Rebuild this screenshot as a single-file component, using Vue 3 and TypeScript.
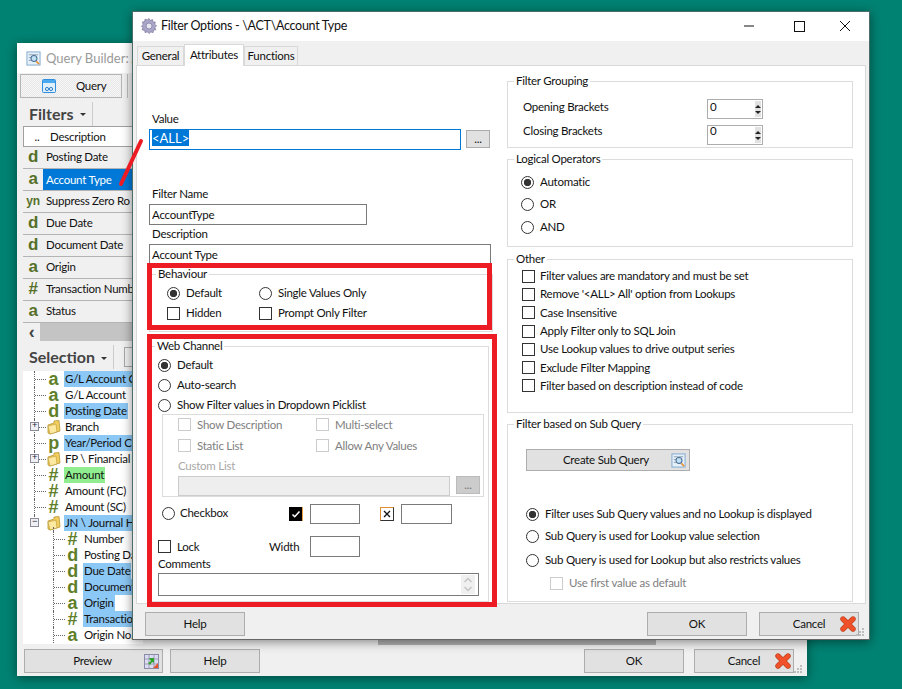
<template>
  <div class="desktop">
    <!-- Query Builder window, behind the dialog -->
    <section class="win back">
      <header class="back-title">
        <svg class="ico-14" viewBox="0 0 16 16"><use href="#query-ico" /></svg>
        <span>Query Builder: A</span>
      </header>
      <div class="back-tabs">
        <div class="query-tab">
          <svg width="14" height="14" viewBox="0 0 14 14">
            <rect x=".5" y=".5" width="13" height="13" rx="1" fill="#dff0fc" stroke="#2f8ee0" />
            <rect x="1" y="1" width="12" height="3" fill="#4aa8ee" />
            <circle cx="5" cy="10" r="1.6" fill="none" stroke="#2f7fc8" />
            <circle cx="9" cy="10" r="1.6" fill="none" stroke="#2f7fc8" />
          </svg>
          <span>Query</span>
        </div>
        <i class="tab-sep"></i>
      </div>

      <div class="pane-head">
        <b>Filters</b><i class="caret"></i><i class="head-sep"></i>
      </div>
      <div class="filter-table">
        <div class="filter-top"><span>..</span><span>Description</span></div>
        <div v-for="f in filters" :key="f.name" class="filter-row" :class="{ picked: f.picked }">
          <b :class="{ small: f.type === 'yn' }">{{ f.type }}</b>
          <span>{{ f.name }}</span>
        </div>
        <div class="h-scroll"><span>‹</span><i></i></div>
      </div>

      <div class="pane-head selection">
        <b>Selection</b><i class="caret"></i><i class="head-sep"></i><i class="mini-btn"></i>
      </div>
      <div class="tree">
        <div v-for="(n, i) in tree" :key="i" class="node" :class="{ deep: n.deep, last: n.last }">
          <i v-if="n.toggle" class="toggle">{{ n.toggle }}</i>
          <i class="twig"></i>
          <svg v-if="n.folder" class="folder" viewBox="0 0 14 15">
            <path d="M1 5 L7 3 L7 1 L12 .5 L13 11 L3 14 L1 13 Z" fill="#f3cf5e" stroke="#b89434" stroke-width=".8" />
            <path d="M1 6 L9 4 L10 12 L3 14 Z" fill="#fbe9a0" stroke="#b89434" stroke-width=".6" />
          </svg>
          <b v-else class="kind">{{ n.type }}</b>
          <span class="node-text" :class="n.mark">{{ n.text }}</span>
          <i v-if="n.gap" class="white-gap"></i>
        </div>
      </div>
      <i class="hidden-bar"></i>

      <footer class="back-foot">
        <button class="btn preview">Preview
          <svg width="15" height="15" viewBox="0 0 15 15">
            <rect x=".5" y=".5" width="14" height="14" fill="#dcdcf0" stroke="#8a8aa8" />
            <path d="M5 .5V14.5M10 .5V14.5M.5 5H14.5M.5 10H14.5" stroke="#9c9cb8" />
            <path d="M5 4h5v5l-2-1-2 3-2-2 3-2z" fill="#2aa52a" />
            <path d="M9 14l5-5v5z" fill="#e8552a" />
          </svg>
        </button>
        <button class="btn help-back">Help</button>
        <span class="spring"></span>
        <button class="btn">OK</button>
        <button class="btn cancel">Cancel
          <svg class="x-ico" viewBox="0 0 16 16"><use href="#red-x" /></svg>
        </button>
      </footer>
      <i class="grip"></i>
    </section>

    <!-- Filter Options dialog -->
    <section class="win dialog">
      <header class="dlg-title">
        <svg width="16" height="16" viewBox="0 0 16 16">
          <path d="M8 .5l1.3 2 2.2-1 .4 2.4 2.4.2-.7 2.3 2 1.4-1.8 1.7 1 2.2-2.4.5-.3 2.4-2.3-.7L8 15.5l-1.7-1.8-2.2 1-.5-2.4-2.4-.3.7-2.3L.5 8l1.8-1.7-1-2.2 2.4-.5.3-2.4 2.3.7z" fill="#a9a6c8" stroke="#77749c" stroke-width=".7" />
          <circle cx="8" cy="8" r="3" fill="#e6e5f2" stroke="#77749c" stroke-width=".7" />
        </svg>
        <span>Filter Options - \ACT\Account Type</span>
        <span class="spring"></span>
        <svg class="cap cap-min" width="46" height="30" viewBox="0 0 46 30"><path d="M13 15h10" stroke="#111" /></svg>
        <svg class="cap" width="46" height="30" viewBox="0 0 46 30"><rect x="17.5" y="10.5" width="10" height="10" fill="none" stroke="#111" /></svg>
        <svg class="cap" width="46" height="30" viewBox="0 0 46 30"><path d="M17 10l10 10M27 10L17 20" stroke="#111" /></svg>
      </header>

      <nav class="tabs">
        <span class="tab t-general">General</span>
        <span class="tab on">Attributes</span>
        <span class="tab t-functions">Functions</span>
      </nav>

      <div class="page">
        <div class="col-left">
          <label class="lbl value-lbl">Value</label>
          <div class="value-row">
            <div class="input value-input"><span class="sel">&lt;ALL&gt;</span></div>
            <button class="btn dots">...</button>
          </div>
          <label class="lbl name-lbl">Filter Name</label>
          <div class="input name-input">AccountType</div>
          <label class="lbl desc-lbl">Description</label>
          <div class="input desc-input">Account Type</div>

          <div class="group behaviour">
            <span class="legend">Behaviour</span>
            <div class="two-up">
              <label class="opt"><i class="radio on"></i>Default</label>
              <label class="opt"><i class="radio"></i>Single Values Only</label>
              <label class="opt"><i class="check"></i>Hidden</label>
              <label class="opt"><i class="check"></i>Prompt Only Filter</label>
            </div>
            <i class="red-box"></i>
          </div>

          <div class="group web">
            <span class="legend">Web Channel</span>
            <label class="opt web-opt"><i class="radio on"></i>Default</label>
            <label class="opt web-opt"><i class="radio"></i>Auto-search</label>
            <label class="opt web-opt"><i class="radio"></i>Show Filter values in Dropdown Picklist</label>
            <div class="picklist">
              <div class="pick-grid">
                <label class="opt off"><i class="check"></i>Show Description</label>
                <label class="opt off"><i class="check"></i>Multi-select</label>
                <label class="opt off"><i class="check"></i>Static List</label>
                <label class="opt off"><i class="check"></i>Allow Any Values</label>
              </div>
              <span class="custom-lbl">Custom List</span>
              <div class="custom-row">
                <div class="custom-input"></div>
                <button class="btn dots off-btn">...</button>
              </div>
            </div>
            <div class="checkbox-row">
              <label class="opt cb-opt"><i class="radio"></i>Checkbox</label>
              <i class="tick-black">
                <svg width="10" height="10" viewBox="0 0 10 10"><path d="M1.5 5.5l2.2 2.2L8.5 2.5" fill="none" stroke="#fff" stroke-width="1.6" /></svg>
              </i>
              <div class="input small-input"></div>
              <i class="tick-x">
                <svg width="10" height="10" viewBox="0 0 10 10"><path d="M2 2l6 6M8 2l-6 6" stroke="#111" stroke-width="1.3" /></svg>
              </i>
              <div class="input small-input"></div>
            </div>
            <div class="lock-row">
              <label class="opt lock-opt"><i class="check"></i>Lock</label>
              <span class="width-lbl">Width</span>
              <div class="input small-input tall"></div>
            </div>
            <label class="lbl comments-lbl">Comments</label>
            <div class="input comments">
              <div class="v-arrows">
                <svg width="8" height="6" viewBox="0 0 8 6"><path d="M.5 5L4 1.5 7.5 5" fill="none" stroke="#c4c4c4" stroke-width="1.4" /></svg>
                <svg width="8" height="6" viewBox="0 0 8 6"><path d="M.5 1L4 4.5 7.5 1" fill="none" stroke="#c4c4c4" stroke-width="1.4" /></svg>
              </div>
            </div>
            <i class="red-box"></i>
          </div>
        </div>

        <div class="col-right">
          <div class="group grouping">
            <span class="legend">Filter Grouping</span>
            <div v-for="b in brackets" :key="b" class="bracket-row">
              <span>{{ b }}</span>
              <div class="spin">
                <span>0</span>
                <div class="spin-btns"><i class="up"></i><i class="down"></i></div>
              </div>
            </div>
          </div>

          <div class="group logical">
            <span class="legend">Logical Operators</span>
            <label class="opt"><i class="radio on"></i>Automatic</label>
            <label class="opt"><i class="radio"></i>OR</label>
            <label class="opt and-opt"><i class="radio"></i>AND</label>
          </div>

          <div class="group other">
            <span class="legend">Other</span>
            <label v-for="o in others" :key="o" class="opt"><i class="check"></i>{{ o }}</label>
          </div>

          <div class="group sub">
            <span class="legend">Filter based on Sub Query</span>
            <button class="btn sub-btn">Create Sub Query
              <svg class="ico-14" viewBox="0 0 16 16"><use href="#query-ico" /></svg>
            </button>
            <label class="opt r1"><i class="radio on"></i>Filter uses Sub Query values and no Lookup is displayed</label>
            <label class="opt r2"><i class="radio"></i>Sub Query is used for Lookup value selection</label>
            <label class="opt r3"><i class="radio"></i>Sub Query is used for Lookup but also restricts values</label>
            <label class="opt off first"><i class="check"></i>Use first value as default</label>
          </div>
        </div>
      </div>

      <footer class="dlg-foot">
        <button class="btn">Help</button>
        <span class="spring"></span>
        <button class="btn">OK</button>
        <button class="btn cancel">Cancel
          <svg class="x-ico" viewBox="0 0 16 16"><use href="#red-x" /></svg>
        </button>
      </footer>
      <i class="grip"></i>
    </section>

    <!-- hand drawn annotation -->
    <svg class="slash" width="30" height="50" viewBox="0 0 30 50">
      <path d="M24 3L4 46" stroke="#ed1c24" stroke-width="4" stroke-linecap="round" />
    </svg>

    <svg width="0" height="0" class="defs">
      <defs>
        <g id="red-x">
          <path d="M3 3l10 10M13 3L3 13" stroke="#b8431f" stroke-width="5.4" stroke-linecap="round" />
          <path d="M3 3l10 10M13 3L3 13" stroke="#f0502a" stroke-width="4.2" stroke-linecap="round" />
        </g>
        <g id="query-ico">
          <rect x="1" y="1" width="14" height="14" fill="#e4f0fa" stroke="#7fa8cf" />
          <path d="M3 4h10M3 7h3M3 10h3" stroke="#8fa0b0" />
          <circle cx="8.5" cy="8" r="3.2" fill="#bfe0f5" stroke="#4a6f94" stroke-width="1.1" />
          <path d="M11 11l3 3" stroke="#e8943a" stroke-width="1.8" />
        </g>
      </defs>
    </svg>
  </div>
</template>

<script setup lang="ts">
interface FilterRow {
  type: string;
  name: string;
  picked?: boolean;
}

interface TreeNode {
  type?: string;
  text: string;
  mark?: string;
  folder?: boolean;
  toggle?: string;
  deep?: boolean;
  last?: boolean;
  gap?: boolean;
}

const filters: FilterRow[] = [
  { type: 'd', name: 'Posting Date' },
  { type: 'a', name: 'Account Type', picked: true },
  { type: 'yn', name: 'Suppress Zero Ro' },
  { type: 'd', name: 'Due Date' },
  { type: 'd', name: 'Document Date' },
  { type: 'a', name: 'Origin' },
  { type: '#', name: 'Transaction Numb' },
  { type: 'a', name: 'Status' },
];

const tree: TreeNode[] = [
  { type: 'a', text: 'G/L Account C', mark: 'blue' },
  { type: 'a', text: 'G/L Account' },
  { type: 'd', text: 'Posting Date', mark: 'blue' },
  { text: 'Branch', folder: true, toggle: '+' },
  { type: 'p', text: 'Year/Period C', mark: 'blue' },
  { text: 'FP \\ Financial', folder: true, toggle: '+' },
  { type: '#', text: 'Amount', mark: 'green' },
  { type: '#', text: 'Amount (FC)' },
  { type: '#', text: 'Amount (SC)' },
  { text: 'JN \\ Journal H', mark: 'blue', folder: true, toggle: '−', last: true },
  { type: '#', text: 'Number', deep: true },
  { type: 'd', text: 'Posting Da', deep: true },
  { type: 'd', text: 'Due Date', mark: 'blue', deep: true },
  { type: 'd', text: 'Document', mark: 'blue', deep: true },
  { type: 'a', text: 'Origin', mark: 'blue', deep: true, gap: true },
  { type: '#', text: 'Transactio', mark: 'blue', deep: true },
  { type: 'a', text: 'Origin No.', deep: true },
];

const brackets = ['Opening Brackets', 'Closing Brackets'];

const others = [
  'Filter values are mandatory and must be set',
  "Remove '<ALL> All' option from Lookups",
  'Case Insensitive',
  'Apply Filter only to SQL Join',
  'Use Lookup values to drive output series',
  'Exclude Filter Mapping',
  'Filter based on description instead of code',
];
</script>

<style>
html,
body {
  margin: 0;
  background: #008272;
}
</style>

<style scoped>
.desktop {
  position: relative;
  width: 902px;
  height: 689px;
  overflow: hidden;
  background: #008272;
  font: 11.5px/16px Lato, "Open Sans", sans-serif;
  letter-spacing: -0.25px;
  color: #111;
}
.defs {
  position: absolute;
}
i {
  font-style: normal;
  display: block;
  flex: none;
}
.spring {
  flex: 1;
}

/* windows */
.win {
  position: absolute;
  box-sizing: border-box;
  background: #f0f0f0;
  display: flex;
  flex-direction: column;
  box-shadow: 0 2px 10px rgba(0, 0, 0, 0.45);
}
.back {
  left: 17px;
  top: 43px;
  width: 790px;
  height: 633px;
  padding-left: 6px;
}
.dialog {
  left: 132px;
  top: 11px;
  width: 738px;
  height: 629px;
  border: 1px solid #4d6e68;
  border-bottom-color: #666;
}
.grip {
  position: absolute;
  right: 5px;
  bottom: 3px;
  width: 2px;
  height: 2px;
  background: #bdbdbd;
  box-shadow: -3px 0 #bdbdbd, -6px 0 #bdbdbd, 0 -3px #bdbdbd, -3px -3px #bdbdbd, 0 -6px #bdbdbd;
}

/* buttons */
.btn {
  box-sizing: border-box;
  width: 100px;
  height: 24px;
  padding: 0;
  border: 1px solid #adadad;
  background: #e1e1e1;
  font: inherit;
  letter-spacing: inherit;
  color: #111;
  position: relative;
  flex: none;
}
.cancel {
  margin-left: 12px;
}
.back-foot .cancel {
  margin-left: 10px;
}
.x-ico {
  position: absolute;
  right: 2px;
  top: 3px;
  width: 16px;
  height: 16px;
}
.ico-14 {
  width: 15px;
  height: 15px;
  flex: none;
}

/* back window */
.back-title {
  height: 30px;
  margin-left: -6px;
  padding-left: 9px;
  display: flex;
  align-items: center;
  gap: 5px;
  background: #fff;
  color: #9a9a9a;
  font-size: 13px;
  letter-spacing: 0;
  white-space: nowrap;
}
.back-tabs {
  display: flex;
  align-items: center;
  height: 25px;
  margin-left: -3px;
}
.query-tab {
  box-sizing: border-box;
  width: 102px;
  height: 24px;
  border: 1px solid #b5b5b5;
  background: repeating-conic-gradient(#e8e8e8 0 25%, #f6f6f6 0 50%) 0 0 / 2px 2px;
  display: flex;
  align-items: center;
  padding-left: 21px;
  gap: 20px;
}
.tab-sep {
  width: 1px;
  height: 24px;
  margin-left: 5px;
  background: #bdbdbd;
}
.pane-head {
  box-sizing: border-box;
  height: 28px;
  display: flex;
  align-items: center;
  padding: 3px 0 0 6px;
  color: #444;
}
.pane-head b {
  font-size: 16px;
  letter-spacing: 0;
}
.caret {
  margin-left: 6px;
  border: 3px solid transparent;
  border-top: 3px solid #333;
  border-bottom: 0;
  margin-top: 2px;
}
.head-sep {
  width: 1px;
  height: 24px;
  margin-left: 6px;
  background: #ccc;
}
.filter-table {
  width: 120px;
  overflow: hidden;
  white-space: nowrap;
}
.filter-top {
  box-sizing: border-box;
  height: 21px;
  display: flex;
  align-items: center;
  background: #fff;
  border: 1px solid #a0a0a0;
  border-right: 0;
}
.filter-top span:first-child {
  width: 26px;
  text-align: center;
}
.filter-row {
  box-sizing: border-box;
  height: 22px;
  display: flex;
  align-items: center;
  border-bottom: 1px solid #b4b4b4;
  padding-bottom: 1px;
}
.filter-row b {
  width: 20px;
  flex: none;
  text-align: center;
  font: bold 17px/20px "Liberation Sans", sans-serif;
  color: #56702a;
}
.filter-row b.small {
  font-size: 12px;
}
.filter-row span {
  padding-left: 3px;
}
.filter-row.picked span {
  background: #0078d7;
  color: #fff;
  flex: 1;
  height: 21px;
  line-height: 21px;
}
.h-scroll {
  height: 18px;
  display: flex;
  align-items: center;
}
.h-scroll span {
  width: 17px;
  text-align: center;
  font: bold 18px/16px "Liberation Sans", sans-serif;
  color: #444;
}
.h-scroll i {
  flex: 1;
  height: 18px;
  background: #c4c4c4;
}
.selection {
  height: 28px;
  margin-top: 2px;
  padding-top: 0;
}
.mini-btn {
  width: 24px;
  height: 18px;
  margin-left: 10px;
  border: 1px solid #a8a8a8;
}
.tree {
  width: 120px;
  height: 273px;
  background: #fff;
  overflow: hidden;
}
.node {
  height: 16px;
  display: flex;
  align-items: center;
  white-space: nowrap;
  padding-left: 11px;
  position: relative;
}
.node.deep {
  padding-left: 30px;
}
.twig {
  width: 13px;
  height: 16px;
  box-sizing: border-box;
  border-left: 1px dotted #666;
  background: linear-gradient(90deg, #666 50%, transparent 50%) 0 8px / 2px 1px repeat-x;
  margin-right: 1px;
}
.node.last .twig {
  height: 8px;
  margin-bottom: 8px;
}
.node.last::after {
  content: "";
  position: absolute;
  left: 30px;
  top: 12px;
  height: 4px;
  border-left: 1px dotted #666;
}
.toggle {
  position: absolute;
  left: 7px;
  top: 3px;
  z-index: 1;
  box-sizing: border-box;
  width: 9px;
  height: 9px;
  border: 1px solid #8c8c9c;
  background: #eef0f4;
  font: 9px/7px "Liberation Mono", monospace;
  text-align: center;
  color: #223;
}
.kind {
  width: 11px;
  margin-right: 5px;
  text-align: center;
  font: bold 18px/16px "Liberation Sans", sans-serif;
  color: #5f7f2a;
  flex: none;
}
.folder {
  width: 14px;
  height: 15px;
  margin: 0 3px 0 -1px;
  flex: none;
}
.node-text {
  padding: 0 1px;
  line-height: 16px;
}
.node-text.blue {
  background: #8cc8f5;
}
.node-text.green {
  background: #90ee90;
}
.white-gap {
  width: 18px;
  height: 16px;
  background: #fff;
}
.hidden-bar {
  position: absolute;
  left: 361px;
  top: 596px;
  width: 278px;
  height: 6px;
  background: #b2b2b2;
}
.back-foot {
  display: flex;
  align-items: center;
  margin-top: 5px;
  padding-right: 13px;
  padding-left: 1px;
}
.preview {
  width: 139px;
  padding-right: 2px;
}
.preview svg {
  position: absolute;
  right: 3px;
  top: 4px;
}
.help-back {
  width: 90px;
  margin-left: 7px;
}

/* dialog chrome */
.dlg-title {
  height: 29px;
  flex: none;
  display: flex;
  align-items: center;
  padding: 0 0 1px 8px;
  box-sizing: border-box;
  gap: 4px;
  background: #fff;
  font-size: 12.5px;
  letter-spacing: -0.3px;
  white-space: nowrap;
}
.cap {
  flex: none;
  margin-left: -4px;
}
.tabs {
  height: 24px;
  flex: none;
  display: flex;
  align-items: flex-end;
  padding-left: 4px;
  position: relative;
  z-index: 1;
}
.tab {
  box-sizing: border-box;
  height: 19px;
  line-height: 17px;
  text-align: center;
  border: 1px solid #d9d9d9;
  border-bottom: 0;
  background: #f0f0f0;
}
.t-general {
  width: 47px;
}
.t-functions {
  width: 54px;
}
.tab.on {
  width: 60px;
  height: 22px;
  margin-bottom: -1px;
  padding-top: 1px;
  background: #fff;
  border-bottom: 0;
}
.page {
  flex: 1;
  display: flex;
  margin: 0 3px;
  box-sizing: border-box;
  border: 1px solid #d9d9d9;
  background: #fff;
  height: 539px;
}
.col-left {
  width: 370px;
  flex: none;
  padding-left: 12px;
  box-sizing: border-box;
}
.col-right {
  width: 346px;
  flex: none;
}
.dlg-foot {
  height: 35px;
  flex: none;
  display: flex;
  align-items: flex-start;
  padding: 8px 10px 0 12px;
  box-sizing: border-box;
}

/* form bits */
.lbl {
  display: block;
  height: 16px;
}
.input {
  box-sizing: border-box;
  height: 21px;
  border: 1px solid #7a7a7a;
  background: #fff;
  padding: 0 2px;
  line-height: 19px;
  flex: none;
  white-space: nowrap;
}
.value-lbl {
  margin-top: 45px;
  padding-left: 3px;
}
.value-row {
  display: flex;
  align-items: flex-start;
  margin-top: 2px;
  gap: 5px;
}
.value-input {
  width: 312px;
  height: 21px;
  border-color: #0078d7;
  font-size: 13px;
  letter-spacing: 0;
}
.sel {
  background: #0078d7;
  color: #fff;
  display: inline-block;
  line-height: 16px;
  vertical-align: 1px;
}
.dots {
  width: 24px;
  height: 18px;
  margin-top: 1px;
  line-height: 14px;
}
.name-lbl {
  margin-top: 36px;
  padding-left: 3px;
}
.name-input {
  width: 218px;
  height: 21px;
  margin-top: 2px;
}
.desc-lbl {
  margin-top: 1px;
  padding-left: 3px;
}
.desc-input {
  width: 342px;
  height: 21px;
  margin-top: 2px;
  position: relative;
  z-index: 0;
}

.group {
  position: relative;
  box-sizing: border-box;
  border: 1px solid #dcdcdc;
}
.legend {
  position: absolute;
  top: -9px;
  left: 6px;
  padding: 0 2px;
  background: #fff;
  white-space: nowrap;
}
.web > .legend {
  left: 5px;
}
.red-box {
  position: absolute;
  border: 5px solid #ed1c24;
  box-sizing: border-box;
  pointer-events: none;
}
.opt {
  display: flex;
  align-items: center;
  white-space: nowrap;
  gap: 6px;
}
.radio,
.check {
  box-sizing: border-box;
  width: 13px;
  height: 13px;
  border: 1px solid #333;
  background: #fff;
}
.radio {
  border-radius: 50%;
}
.radio.on {
  background: radial-gradient(circle, #333 0 3.4px, #fff 4px);
}
.off {
  color: #808080;
}
.off .check {
  border-color: #ccc;
}

.behaviour {
  width: 344px;
  height: 58px;
  margin-top: 9px;
}
.behaviour .red-box {
  left: -3px;
  top: -12px;
  width: 345px;
  height: 67px;
}
.two-up {
  display: grid;
  grid-template-columns: 92px 1fr;
  grid-auto-rows: 20px;
  padding: 8px 0 0 17px;
}
.web {
  width: 340px;
  height: 256px;
  margin-top: 14px;
  padding: 8px 0 0 8px;
}
.web .red-box {
  left: -3px;
  top: -13px;
  width: 350px;
  height: 273px;
}
.web-opt {
  height: 20px;
}
.picklist {
  box-sizing: border-box;
  width: 322px;
  height: 83px;
  margin: -1px 0 0 4px;
  border: 1px solid #dcdcdc;
  padding: 0 0 0 15px;
}
.pick-grid {
  display: grid;
  grid-template-columns: 138px 1fr;
  grid-auto-rows: 21px;
  margin-top: -1px;
}
.custom-lbl {
  display: block;
  color: #a8a8a8;
  height: 16px;
  margin-top: 2px;
}
.custom-row {
  display: flex;
  gap: 6px;
  margin-top: 2px;
}
.custom-input {
  width: 272px;
  height: 20px;
  box-sizing: border-box;
  border: 1px solid #ccc;
  background: #eee;
}
.off-btn {
  background: #ccc;
  border-color: #bbb;
  margin-top: 0;
  color: #777;
}
.checkbox-row {
  display: flex;
  align-items: center;
  height: 21px;
  margin-top: 6px;
  padding-left: 4px;
}
.cb-opt {
  gap: 5px;
  width: 127px;
  margin-top: -1px;
}
.small-input {
  width: 50px;
  height: 20px;
  margin-left: 7px;
}
.tick-black {
  width: 14px;
  height: 14px;
  background: #000;
  border-right: 1px solid #f0a040;
  box-sizing: border-box;
  display: flex;
  align-items: center;
  justify-content: center;
}
.tick-x {
  width: 14px;
  height: 14px;
  box-sizing: border-box;
  border: 1px solid #333;
  border-left-color: #e09030;
  border-top-color: #e09030;
  margin-left: 20px;
  display: flex;
  align-items: center;
  justify-content: center;
}
.tick-x + .small-input {
  width: 51px;
}
.lock-row {
  display: flex;
  align-items: center;
  height: 21px;
  margin-top: 12px;
}
.lock-opt {
  width: 111px;
}
.width-lbl {
  width: 34px;
}
.tall {
  height: 21px;
  margin-left: 7px;
}
.comments-lbl {
  margin-top: -1px;
}
.comments {
  width: 321px;
  height: 23px;
  margin-top: 1px;
  position: relative;
}
.v-arrows {
  position: absolute;
  right: 3px;
  top: 1px;
  width: 14px;
  height: 19px;
  background: #f0f0f0;
  display: flex;
  flex-direction: column;
  align-items: center;
  justify-content: center;
  gap: 3px;
}

/* right column */
.grouping {
  height: 67px;
  margin-top: 15px;
  padding: 14px 0 0 15px;
}
.bracket-row {
  display: flex;
  align-items: center;
  height: 26px;
}
.bracket-row span:first-child {
  width: 184px;
  margin-top: -4px;
}
.bracket-row:last-child span:first-child {
  margin-top: -8px;
}
.spin {
  box-sizing: border-box;
  width: 56px;
  height: 20px;
  border: 1px solid #adadad;
  display: flex;
  align-items: center;
  padding-left: 2px;
  justify-content: space-between;
}
.spin-btns {
  width: 15px;
  height: 16px;
  margin-right: 1px;
  background: #e1e1e1;
  display: flex;
  flex-direction: column;
  align-items: center;
  justify-content: center;
  gap: 3px;
}
.up,
.down {
  border: 3px solid transparent;
}
.up {
  border-bottom: 3px solid #222;
  border-top: 0;
}
.down {
  border-top: 3px solid #222;
  border-bottom: 0;
}
.logical {
  height: 88px;
  margin-top: 11px;
  padding: 14px 0 0 13px;
  display: flex;
  flex-direction: column;
  gap: 6px;
}
.logical .opt {
  height: 16px;
}
.and-opt {
  margin-top: 1px;
}
.other {
  height: 154px;
  margin-top: 12px;
  padding: 7px 0 0 14px;
}
.other .opt {
  height: 18.3px;
  gap: 5px;
}
.sub {
  height: 178px;
  margin-top: 11px;
  padding: 24px 0 0 18px;
}
.sub-btn {
  width: 164px;
  height: 22px;
  padding-right: 4px;
  display: block;
}
.sub-btn svg {
  position: absolute;
  right: 3px;
  top: 3px;
}
.sub .opt {
  height: 16px;
}
.r1 {
  margin-top: 35px;
}
.r2 {
  margin-top: 6px;
}
.r3 {
  margin-top: 8px;
}
.first {
  margin: 7px 0 0 24px;
}

.slash {
  position: absolute;
  left: 117px;
  top: 138px;
}
</style>
